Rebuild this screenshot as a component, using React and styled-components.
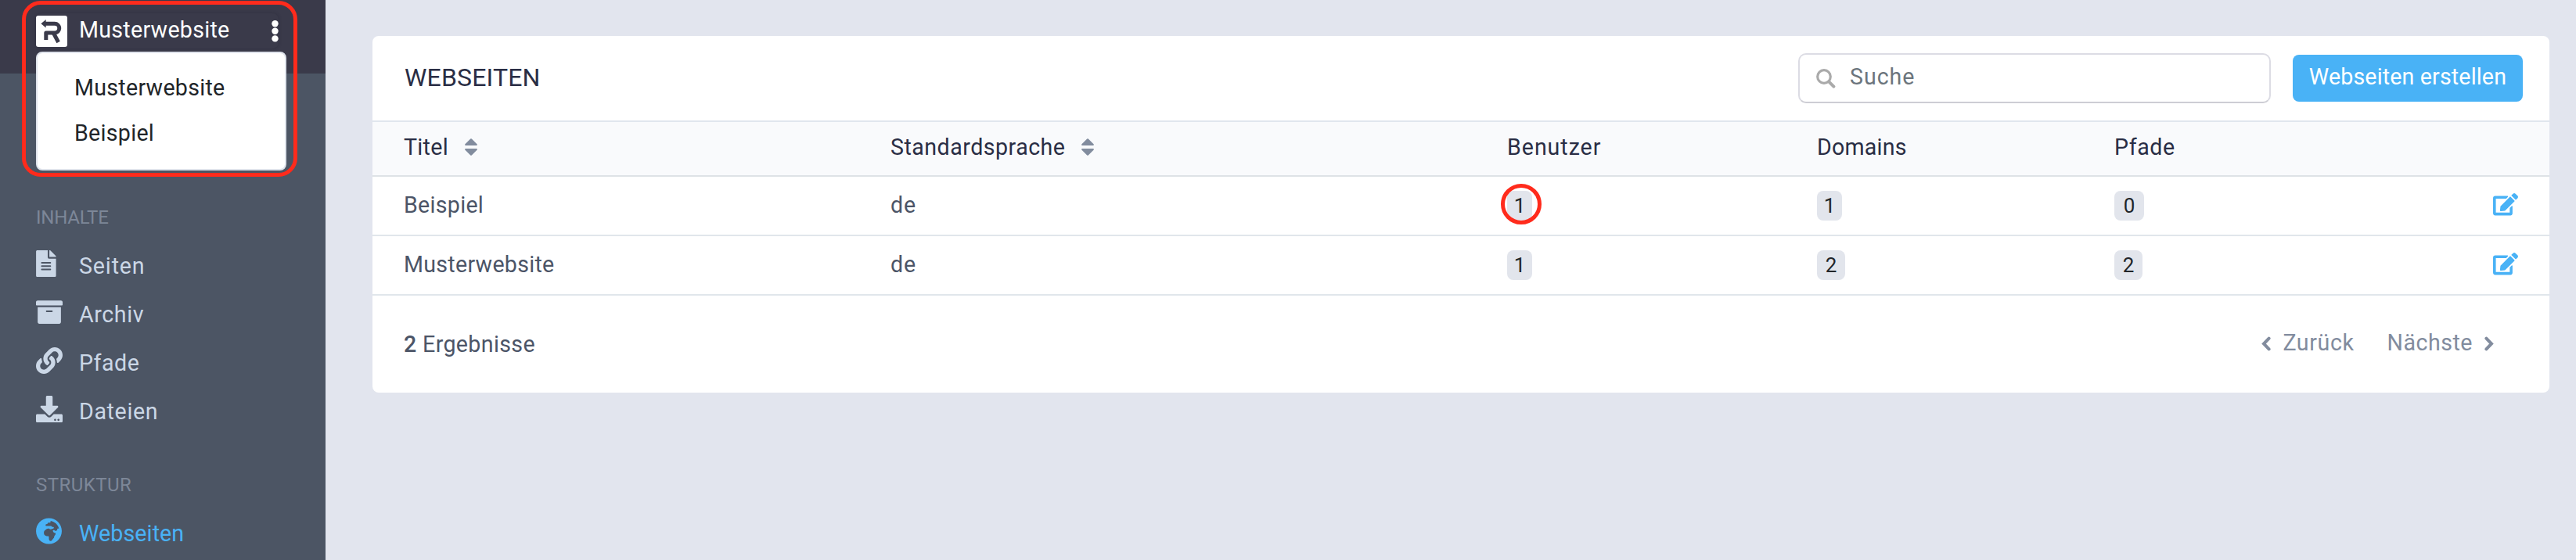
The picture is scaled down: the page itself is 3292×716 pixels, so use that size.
import React from 'react';
import styled, { createGlobalStyle, css } from 'styled-components';
import {
  FaFileAlt, FaArchive, FaLink, FaDownload, FaGlobeAfrica, FaEdit,
} from 'react-icons/fa';

const GlobalStyle = createGlobalStyle`
  * { box-sizing: border-box; }
  body {
    margin: 0;
    background: #e2e5ee;
    font-family: Roboto, "Liberation Sans", sans-serif;
    font-size: 28.6px;
    line-height: 40px;
    color: #212529;
  }
`;

const Page = styled.div`
  display: flex;
  width: 100%;
  height: 716px;
  overflow: hidden;
`;

const Sidebar = styled.aside`
  position: relative;
  flex: none;
  width: 416px;
  background: #4c5564;
`;

const SiteBar = styled.header`
  position: relative;
  height: 94px;
  padding: 17px 60px 0 46px;
  background: #3a3a4a;
`;

const SiteSwitch = styled.button`
  display: flex;
  align-items: center;
  width: 310px;
  height: 45px;
  padding: 0;
  border: 0;
  border-radius: 8px;
  background: #3a3a4a;
  box-shadow: 0 0 4px rgba(30, 30, 48, 0.3);
  color: #fff;
  font: inherit;
`;

const SiteName = styled.span`
  flex: 1;
  margin-left: 15px;
  padding-bottom: 3px;
  text-align: left;
  letter-spacing: 0.28px;
`;

const SiteMenu = styled.ul`
  position: absolute;
  z-index: 2;
  left: 46px;
  top: 66px;
  width: 320px;
  height: 152px;
  margin: 0;
  padding: 15px 0 0 47px;
  list-style: none;
  background: #fff;
  border: 2px solid #dfe3eb;
  border-radius: 8px;
`;

const SiteMenuItem = styled.li`
  height: 58px;
  line-height: 58px;
  letter-spacing: 0.28px;
`;

const marker = css`
  position: absolute;
  z-index: 3;
  border: 5px solid #ff2b1c;
  pointer-events: none;
`;

const MenuMarker = styled.div`
  ${marker}
  left: 28px;
  top: 1px;
  width: 352px;
  height: 225px;
  border-radius: 24px;
`;

const Section = styled.section`
  padding: ${(p) => p.$top}px 0 0 46px;
`;

const SectionTitle = styled.h2`
  margin: 0 0 11px;
  font-size: 24px;
  font-weight: 400;
  line-height: 40px;
  letter-spacing: ${(p) => p.$track}px;
  color: #7d8798;
`;

const NavItem = styled.a`
  display: flex;
  align-items: center;
  height: 62px;
  color: ${(p) => (p.$active ? '#49b2f6' : '#cbd7e6')};
  letter-spacing: ${(p) => p.$track}px;
`;

const NavIcon = styled.span`
  display: flex;
  width: 55px;
  margin-bottom: 6px;
  svg { width: ${(p) => p.$width || 34}px; height: 34px; }
`;

const Main = styled.main`
  flex: 1;
  padding: 46px 34px 0 60px;
`;

const Card = styled.section`
  height: 456px;
  background: #fff;
  border-radius: 8px;
  overflow: hidden;
`;

const CardHeader = styled.div`
  display: flex;
  align-items: center;
  height: 108px;
  padding: 0 34px 0 41px;
`;

const CardTitle = styled.h1`
  flex: 1;
  margin: 0;
  padding-bottom: 2px;
  font-size: 32px;
  font-weight: 400;
  letter-spacing: 0.16px;
  color: #2a2e45;
`;

const SearchBox = styled.div`
  display: flex;
  align-items: center;
  width: 604px;
  height: 64px;
  margin-right: 28px;
  padding: 0 0 4px 21px;
  border: 2px solid #dcdce4;
  border-bottom-color: #cdcdd4;
  border-radius: 10px;
  color: #6c757d;
  letter-spacing: 0.95px;
  svg { margin: 4px 18px 0 0; }
`;

const CreateButton = styled.button`
  width: 294px;
  height: 60px;
  padding: 0 0 4px;
  border: 0;
  border-radius: 8px;
  background: #49b2f6;
  color: #fff;
  font: inherit;
  letter-spacing: 0.15px;
  white-space: nowrap;
`;

const Row = styled.div`
  display: grid;
  grid-template-columns: 622px 788px 396px 380px 1fr 32px;
  align-items: center;
  height: 76px;
  padding: 0 40px;
  border-bottom: 2px solid #e1e6eb;
  color: #4c5567;
`;

const HeadRow = styled(Row)`
  height: 72px;
  padding-bottom: 2px;
  background: #f9fafc;
  border-top: 2px solid #e1e6ee;
  border-bottom-color: #dee2e6;
  color: #2a2e45;
`;

const Cell = styled.div`
  display: flex;
  align-items: center;
  padding-bottom: 2px;
  letter-spacing: ${(p) => p.$track || 0}px;
`;

const EditLink = styled.a`
  display: flex;
  color: #49b2f6;
  svg { width: 32px; height: 28.4px; margin-bottom: 3px; }
`;

const BadgeHolder = styled.div`
  position: relative;
  display: flex;
`;

const Badge = styled.span`
  width: ${(p) => p.$width}px;
  height: 38px;
  border-radius: 8px;
  background: #e2e5ec;
  color: #212529;
  font-size: 26px;
  line-height: 38px;
  text-align: center;
`;

const BadgeMarker = styled.div`
  ${marker}
  left: -8px;
  top: -9px;
  width: 52px;
  height: 52px;
  border-radius: 50%;
`;

const CardFooter = styled.div`
  display: flex;
  align-items: center;
  justify-content: space-between;
  height: 124px;
  padding: 0 71px 0 40px;
`;

const Total = styled.div`
  color: #4c5567;
  letter-spacing: 0.35px;
  b { font-weight: 500; }
`;

const Pager = styled.div`
  display: flex;
  align-items: center;
  gap: 42px;
  padding-bottom: 4px;
  color: #828c9e;
`;

const PageLink = styled.a`
  display: flex;
  align-items: center;
  gap: 15px;
  letter-spacing: ${(p) => p.$track}px;
  svg { margin-top: 3px; }
`;

const Logo = () => (
  <svg width="40" height="40" viewBox="0 0 40 40">
    <rect width="40" height="40" rx="3" fill="#fff" />
    <path d="M11 10.2H23.9A5.85 5.85 0 0 1 23.9 21.9H12.8V31" fill="none" stroke="#3a3a4a" strokeWidth="5" strokeLinejoin="round" />
    <path d="M22.5 22.5L28.6 34" fill="none" stroke="#3a3a4a" strokeWidth="5" />
    <path d="M6.4 10.3L12.7 5V15.6Z" fill="#3a3a4a" />
  </svg>
);

const Dots = () => (
  <svg width="9" height="28" viewBox="0 0 9 28">
    {[4.2, 13.8, 23.4].map((y) => <circle key={y} cx="4.5" cy={y} r="4.2" fill="#fff" />)}
  </svg>
);

const SearchGlyph = () => (
  <svg width="25" height="25" viewBox="0 0 25 25" fill="none" stroke="#aaa">
    <circle cx="10" cy="10" r="8.3" strokeWidth="3.2" />
    <path d="M16.4 16.6L22.4 22.6" strokeWidth="4" strokeLinecap="round" />
  </svg>
);

const Chevron = ({ d }) => (
  <svg width="12" height="19" viewBox="0 0 12 19" fill="none" stroke="currentColor" strokeWidth="4" strokeLinecap="round">
    <path d={d} />
  </svg>
);

const SortMark = styled.svg`
  margin-left: 21px;
`;

const Sort = () => (
  <SortMark width="16" height="22" viewBox="0 0 16 22" fill="#828c9e">
    <path d="M7.2.5Q8-.2 8.8.5L15.6 7.3Q16.4 9 14.8 9H1.2Q-.4 9 .4 7.3Z" />
    <path d="M7.2 21.5Q8 22.2 8.8 21.5L15.6 14.7Q16.4 13 14.8 13H1.2Q-.4 13 .4 14.7Z" />
  </SortMark>
);

const content = [
  { label: 'Seiten', Icon: FaFileAlt, track: 0.85, width: 25.7 },
  { label: 'Archiv', Icon: FaArchive, track: 0.6 },
  { label: 'Pfade', Icon: FaLink, track: 0.5 },
  { label: 'Dateien', Icon: FaDownload, track: 0.65 },
];

const sites = [
  { title: 'Beispiel', lang: 'de', counts: [[1, 32], [1, 32], [0, 38]], marked: true },
  { title: 'Musterwebsite', lang: 'de', counts: [[1, 32], [2, 36], [2, 36]] },
];

export default function App() {
  return (
    <>
      <GlobalStyle />
      <Page>
        <Sidebar>
          <SiteBar>
            <SiteSwitch>
              <Logo />
              <SiteName>Musterwebsite</SiteName>
              <Dots />
            </SiteSwitch>
            <SiteMenu>
              <SiteMenuItem>Musterwebsite</SiteMenuItem>
              <SiteMenuItem>Beispiel</SiteMenuItem>
            </SiteMenu>
            <MenuMarker />
          </SiteBar>
          <Section $top={164}>
            <SectionTitle $track={-0.25}>INHALTE</SectionTitle>
            {content.map(({ label, Icon, track, width }) => (
              <NavItem key={label} $track={track}>
                <NavIcon $width={width}><Icon /></NavIcon>
                {label}
              </NavItem>
            ))}
          </Section>
          <Section $top={43}>
            <SectionTitle $track={0.45}>STRUKTUR</SectionTitle>
            <NavItem $active $track={0.1}>
              <NavIcon $width={33}><FaGlobeAfrica /></NavIcon>
              Webseiten
            </NavItem>
          </Section>
        </Sidebar>
        <Main>
          <Card>
            <CardHeader>
              <CardTitle>WEBSEITEN</CardTitle>
              <SearchBox><SearchGlyph />Suche</SearchBox>
              <CreateButton>Webseiten erstellen</CreateButton>
            </CardHeader>
            <HeadRow>
              <Cell $track={0.3}>Titel<Sort /></Cell>
              <Cell $track={0.48}>Standardsprache<Sort /></Cell>
              <Cell $track={0.95}>Benutzer</Cell>
              <Cell $track={0.2}>Domains</Cell>
              <Cell $track={0.6}>Pfade</Cell>
            </HeadRow>
            {sites.map((site) => (
              <Row key={site.title}>
                <Cell $track={0.28}>{site.title}</Cell>
                <Cell $track={0.9}>{site.lang}</Cell>
                {site.counts.map(([count, width], i) => (
                  <BadgeHolder key={i}>
                    <Badge $width={width}>{count}</Badge>
                    {site.marked && i === 0 && <BadgeMarker />}
                  </BadgeHolder>
                ))}
                <EditLink><FaEdit /></EditLink>
              </Row>
            ))}
            <CardFooter>
              <Total><b>2</b> Ergebnisse</Total>
              <Pager>
                <PageLink $track={0.6}><Chevron d="M9.6 2.6L3 9.5L9.6 16.4" />Zurück</PageLink>
                <PageLink $track={0.5}>Nächste<Chevron d="M2.4 2.6L9 9.5L2.4 16.4" /></PageLink>
              </Pager>
            </CardFooter>
          </Card>
        </Main>
      </Page>
    </>
  );
}
